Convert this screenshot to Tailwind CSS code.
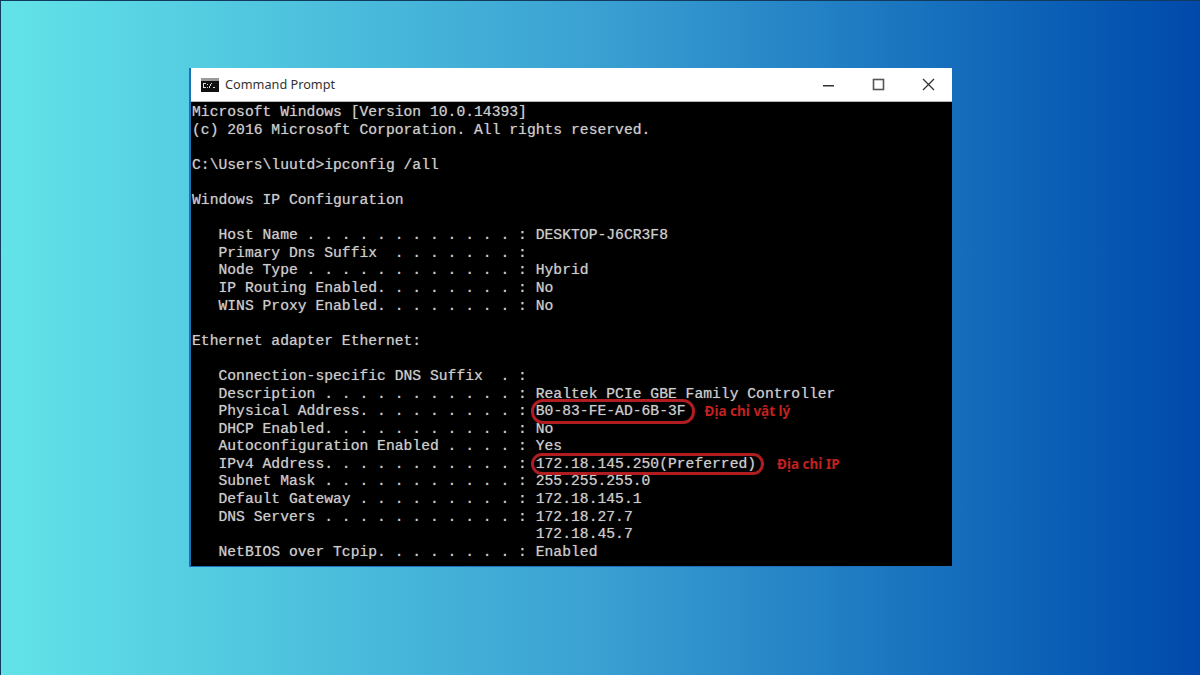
<!DOCTYPE html>
<html lang="en">
<head>
    <meta charset="UTF-8">
    <meta name="viewport" content="width=device-width, initial-scale=1.0">
    <title>Command Prompt</title>
    <script src="https://cdn.jsdelivr.net/npm/@tailwindcss/browser@4"></script>
</head>
<body class="h-[675px] w-[1200px] overflow-hidden">
    <div class="h-[675px] w-[1200px] bg-linear-to-r from-[#62e3e8] via-[#3aa0d2] to-[#0249ab] border-t border-l border-[#123a5c] pl-[188px] pt-[67px]">
        <div class="w-[763px] h-[499px] flex flex-col border-l-[2px] border-b border-[#1f6fb8] bg-black">
            <div class="h-[34px] shrink-0 bg-white border-b border-[#b8b8b8] flex items-center pl-[10px] font-['Noto_Sans',sans-serif]">
                <svg class="w-[18px] h-[14px] mr-[6px]" viewBox="0 0 18 14">
                    <rect width="18" height="14" fill="#9a9a9a"/>
                    <rect y="3" width="18" height="11" fill="#111"/>
                    <rect x="2" y="5" width="3" height="1" fill="#ddd"/><rect x="2" y="6" width="1" height="3" fill="#ddd"/><rect x="2" y="9" width="3" height="1" fill="#ddd"/>
                    <rect x="6" y="6" width="1" height="1" fill="#ddd"/><rect x="6" y="9" width="1" height="1" fill="#ddd"/>
                    <rect x="8" y="8" width="1" height="2" fill="#ddd"/><rect x="9" y="6" width="1" height="2" fill="#ddd"/><rect x="10" y="5" width="1" height="1" fill="#ddd"/>
                    <rect x="12" y="9" width="2" height="1" fill="#ddd"/>
                </svg>
                <span class="text-[12.7px] text-[#333]">Command Prompt</span>
                <div class="ml-auto flex items-center">
                    <svg class="w-[50px] h-[32px]" viewBox="0 0 50 32"><rect x="14" y="16" width="11" height="1.5" fill="#333"/></svg>
                    <svg class="w-[50px] h-[32px]" viewBox="0 0 50 32"><rect x="14.5" y="10.5" width="10" height="10" fill="none" stroke="#555" stroke-width="1.6"/></svg>
                    <svg class="w-[43px] h-[32px]" viewBox="0 0 43 32"><path d="M14 10 L25 21 M25 10 L14 21" stroke="#333" stroke-width="1.3"/></svg>
                </div>
            </div>
            <pre class="pl-[1px] pt-[2px] overflow-hidden font-['Liberation_Mono',monospace] text-[14.7px] leading-[17.6px] text-[#cccccc] [text-shadow:0_0_1px_rgba(204,204,204,0.6)]">Microsoft Windows [Version 10.0.14393]
(c) 2016 Microsoft Corporation. All rights reserved.

C:\Users\luutd&gt;ipconfig /all

Windows IP Configuration

   Host Name . . . . . . . . . . . . : DESKTOP-J6CR3F8
   Primary Dns Suffix  . . . . . . . :
   Node Type . . . . . . . . . . . . : Hybrid
   IP Routing Enabled. . . . . . . . : No
   WINS Proxy Enabled. . . . . . . . : No

Ethernet adapter Ethernet:

   Connection-specific DNS Suffix  . :
   Description . . . . . . . . . . . : Realtek PCIe GBE Family Controller
   Physical Address. . . . . . . . . : <span class="relative">B0-83-FE-AD-6B-3F<span class="absolute left-[-5px] right-[-9px] top-[-4px] bottom-[-5px] rounded-[12px] border-[3px] border-[#b01c20]"></span></span><span class="ml-[19px] align-[-1px] font-['Noto_Sans',sans-serif] font-bold text-[13.5px] leading-none text-[#c4201f] [text-shadow:none]">Địa chỉ vật lý</span>
   DHCP Enabled. . . . . . . . . . . : No
   Autoconfiguration Enabled . . . . : Yes
   IPv4 Address. . . . . . . . . . . : <span class="relative">172.18.145.250(Preferred)<span class="absolute left-[-5px] right-[-8px] top-[-3px] bottom-[-3px] rounded-[11px] border-[3px] border-[#b01c20]"></span></span><span class="ml-[21px] align-[-1px] font-['Noto_Sans',sans-serif] font-bold text-[13.5px] leading-none text-[#c4201f] [text-shadow:none]">Địa chỉ IP</span>
   Subnet Mask . . . . . . . . . . . : 255.255.255.0
   Default Gateway . . . . . . . . . : 172.18.145.1
   DNS Servers . . . . . . . . . . . : 172.18.27.7
                                       172.18.45.7
   NetBIOS over Tcpip. . . . . . . . : Enabled</pre>
        </div>
    </div>
</body>
</html>
